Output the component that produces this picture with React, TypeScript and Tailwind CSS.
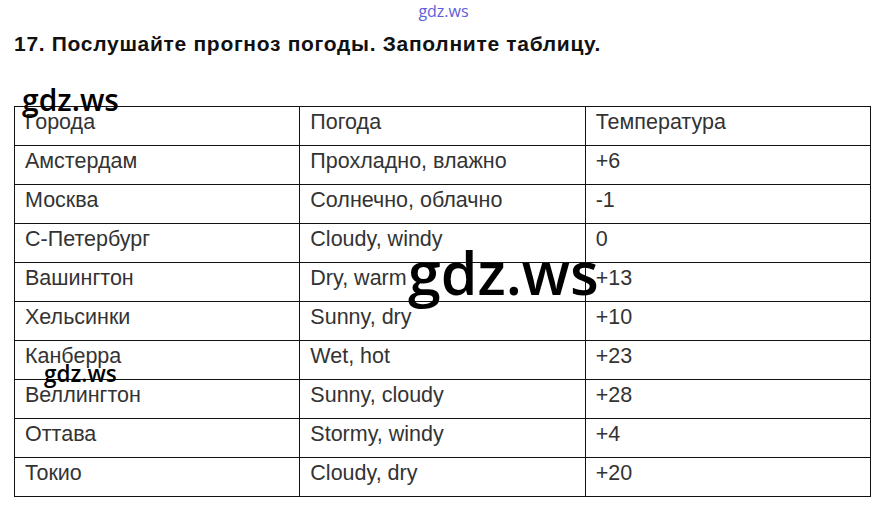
const rows: [string, string, string][] = [
  ['Города', 'Погода', 'Температура'],
  ['Амстердам', 'Прохладно, влажно', '+6'],
  ['Москва', 'Солнечно, облачно', '-1'],
  ['С-Петербург', 'Cloudy, windy', '0'],
  ['Вашингтон', 'Dry, warm', '+13'],
  ['Хельсинки', 'Sunny, dry', '+10'],
  ['Канберра', 'Wet, hot', '+23'],
  ['Веллингтон', 'Sunny, cloudy', '+28'],
  ['Оттава', 'Stormy, windy', '+4'],
  ['Токио', 'Cloudy, dry', '+20'],
];

export default function App() {
  return (
    <div className="relative w-[882px] h-[505px] bg-white overflow-hidden font-['Liberation_Sans',sans-serif]">
      <div className="flex justify-center pt-[1px] h-[22px]">
        <span className="pl-[5px] text-[16px] leading-[20px] text-[#6060d8] font-['Open_Sans',sans-serif]">gdz.ws</span>
      </div>
      <h1 className="pl-[14px] pt-[9px] text-[21px] leading-[26px] tracking-[0.7px] font-bold text-[#111]">
        17. Послушайте прогноз погоды. Заполните таблицу.
      </h1>
      <table className="ml-[14px] mt-[49px] w-[857px] border-collapse table-fixed">
        <tbody>
          {rows.map((r, i) => (
            <tr key={i} className="h-[39px]">
              {r.map((c, j) => (
                <td
                  key={j}
                  className="border border-[#111] align-top pl-[10px] pt-[2px] text-[21.5px] leading-[27px] text-[#333] w-1/3"
                >
                  {c}
                </td>
              ))}
            </tr>
          ))}
        </tbody>
      </table>

      <span className="absolute left-[22px] top-[82px] text-[30px] leading-[36px] font-semibold text-black font-['Open_Sans',sans-serif]">
        gdz.ws
      </span>
      <span className="absolute left-[408px] top-[238px] text-[59px] leading-[68px] font-semibold text-black font-['Open_Sans',sans-serif]">
        gdz.ws
      </span>
      <span className="absolute left-[44px] top-[360px] text-[22.5px] leading-[28px] font-semibold text-black font-['Open_Sans',sans-serif]">
        gdz.ws
      </span>
    </div>
  );
}
